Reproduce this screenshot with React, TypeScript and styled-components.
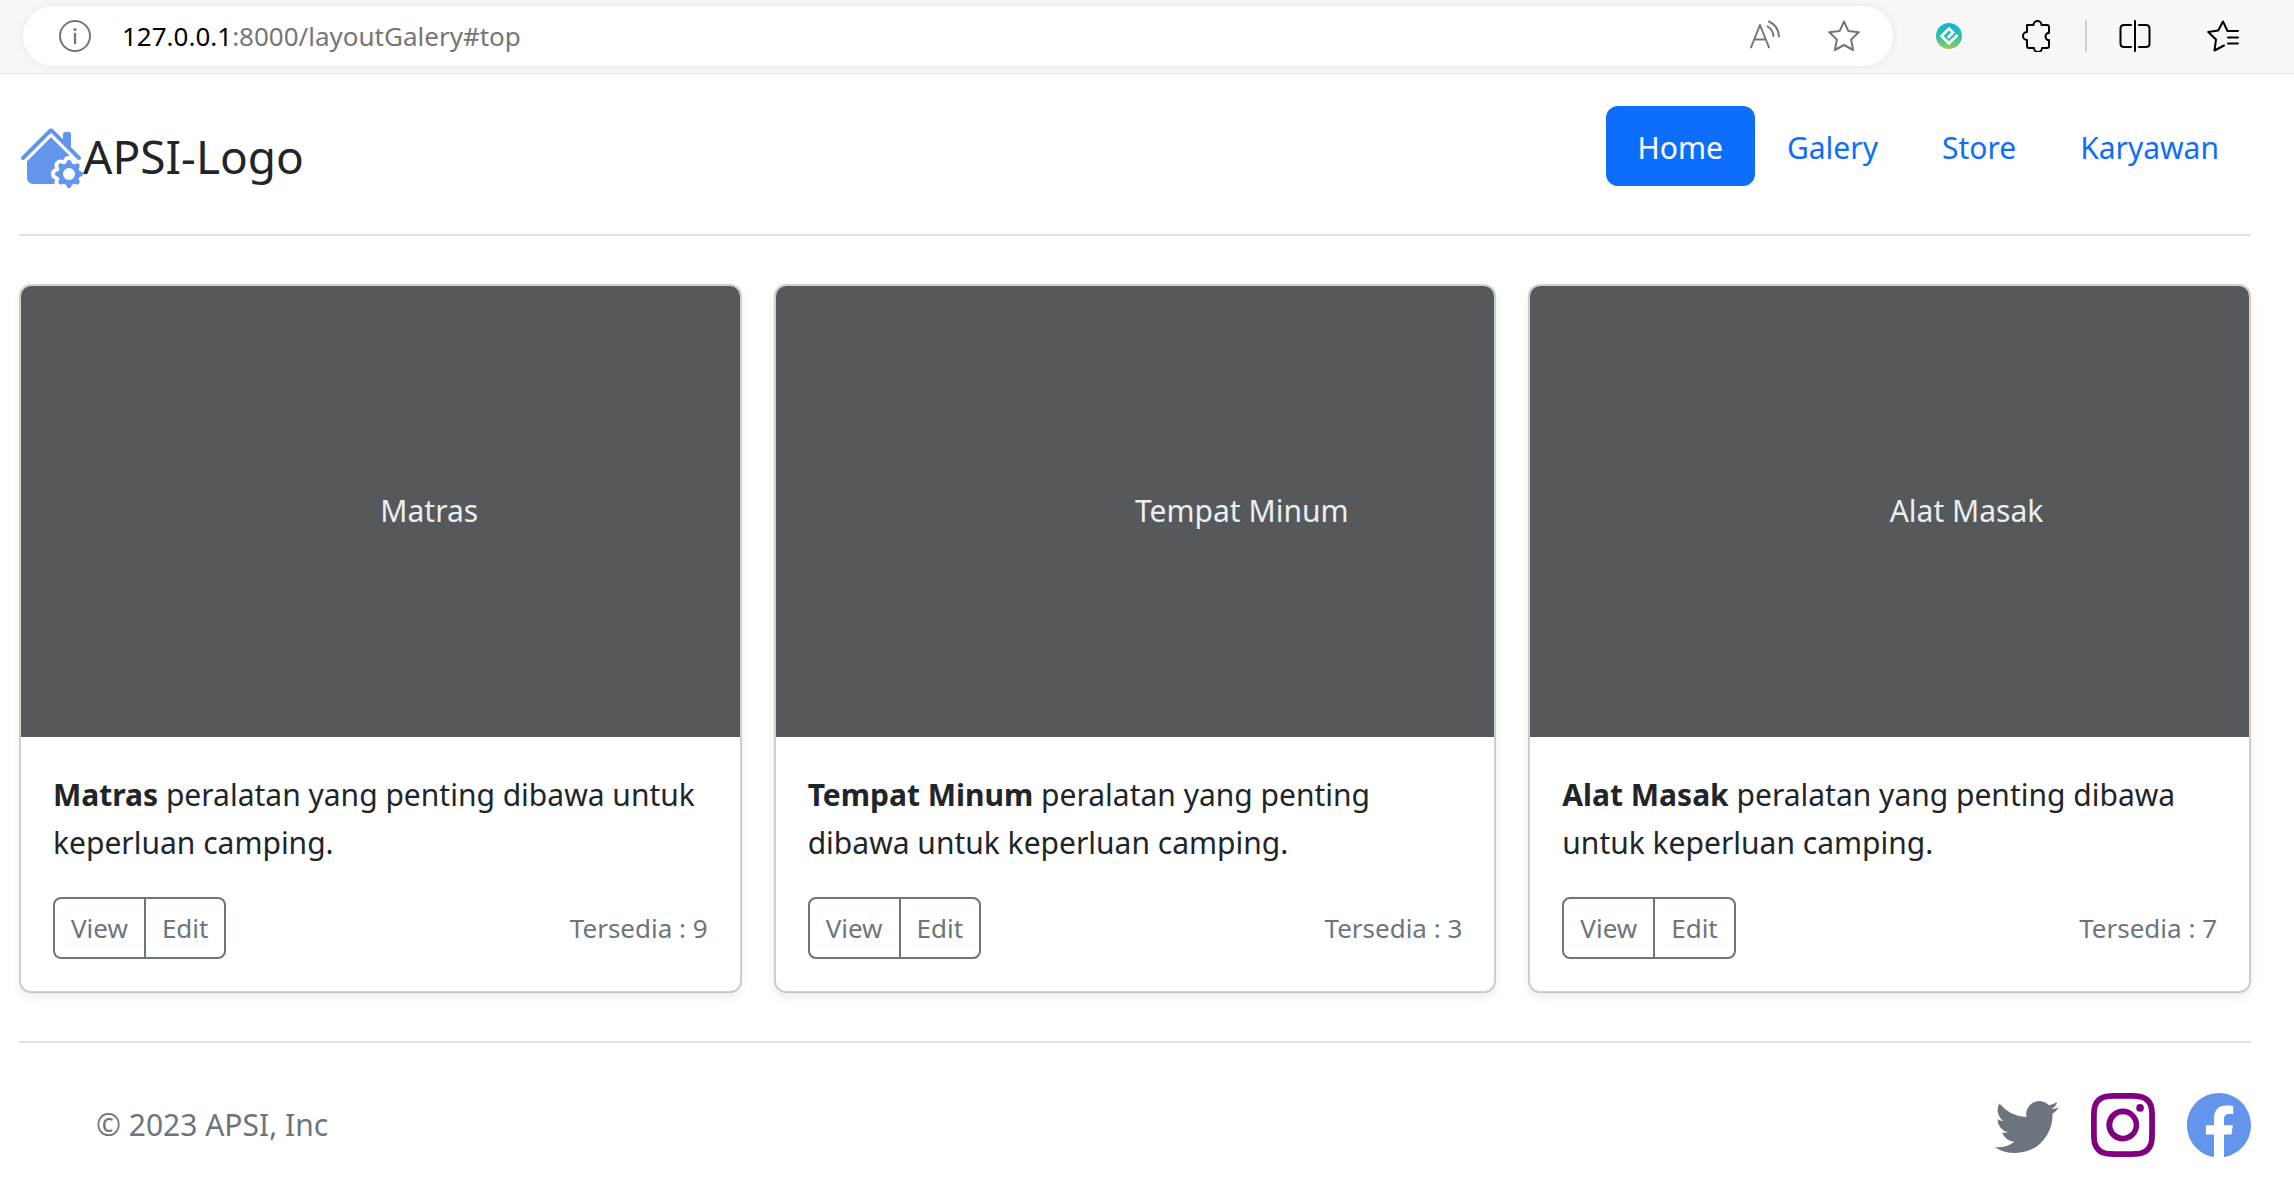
import React from "react";
import styled, { createGlobalStyle } from "styled-components";
import { BsHouseGearFill, BsTwitter, BsInstagram, BsFacebook } from "react-icons/bs";

const Global = createGlobalStyle`
  *, *::before, *::after { box-sizing: border-box; }
  body {
    margin: 0;
    background: #fff;
    color: #212529;
    font-family: "Noto Sans", "Open Sans", sans-serif;
    font-size: 30px;
    line-height: 48px;
  }
`;

const Toolbar = styled.div`
  display: flex;
  align-items: center;
  height: 74px;
  padding: 0 55px 2px 23px;
  background: #f7f7f7;
  border-bottom: 1px solid #e5e5e5;
`;

const AddressBar = styled.div`
  display: flex;
  flex: 1;
  align-items: center;
  height: 60px;
  padding: 0 33px 0 32px;
  border-radius: 30px;
  background: #fff;
  box-shadow: 0 0 8px rgba(0, 0, 0, 0.08);
`;

const Url = styled.div`
  flex: 1;
  margin-left: 27px;
  color: #767676;
  font-size: 26px;
`;

const Host = styled.span`
  color: #000;
`;

const ToolButton = styled.button<{ $muted?: boolean }>`
  display: flex;
  padding: 0;
  border: 0;
  background: none;
  color: ${(p) => (p.$muted ? "#767676" : "#000")};
`;

const BarActions = styled.div`
  display: flex;
  gap: 47px;
`;

const Extensions = styled.div`
  display: flex;
  align-items: center;
  gap: 56px;
  margin-left: 40px;
`;

const Divided = styled.div`
  display: flex;
  align-items: center;
  gap: 32px;
`;

const Separator = styled.span`
  width: 2px;
  height: 32px;
  background: #cfcfcf;
`;

const Page = styled.div`
  padding: 0 43px 0 19px;
`;

const Header = styled.header`
  display: flex;
  justify-content: space-between;
  padding: 32px 0;
  margin-bottom: 48px;
  border-bottom: 2px solid #dee2e6;
`;

const Brand = styled.a`
  display: flex;
  align-items: center;
  height: 96px;
  padding-top: 4px;
  color: #212529;
  font-size: 46px;
  line-height: 72px;
  text-decoration: none;

  svg {
    color: cornflowerblue;
  }
`;

const Nav = styled.nav`
  display: flex;
  align-items: flex-start;
`;

const NavLink = styled.a<{ $active?: boolean }>`
  padding: 18px 32px 14px;
  border-radius: 12px;
  background: ${(p) => (p.$active ? "#0d6efd" : "transparent")};
  color: ${(p) => (p.$active ? "#fff" : "#0d6efd")};
  text-decoration: none;
`;

const Gallery = styled.main`
  display: grid;
  grid-template-columns: repeat(3, minmax(0, 1fr));
  gap: 32px;
`;

const Card = styled.article`
  overflow: hidden;
  border: 2px solid rgba(0, 0, 0, 0.175);
  border-radius: 12px;
  background: #fff;
  background-clip: padding-box;
  box-shadow: 0 4px 8px rgba(0, 0, 0, 0.075);
`;

const Thumb = styled.div`
  display: flex;
  align-items: center;
  height: 451px;
  padding: 0 0 2px 50%;
  background: #55595c;
  color: #eceeef;
`;

const CardBody = styled.div`
  padding: 34px 32px 32px;
`;

const Description = styled.p`
  margin: 0 0 30px;
`;

const CardFooter = styled.div`
  display: flex;
  align-items: center;
  justify-content: space-between;
`;

const ButtonGroup = styled.div`
  display: flex;
`;

const SmallButton = styled.button`
  padding: 8px 16px;
  border: 2px solid #6c757d;
  background: none;
  color: #6c757d;
  font-family: inherit;
  font-size: 26px;
  line-height: 42px;

  &:first-child {
    border-radius: 8px 0 0 8px;
  }
  &:last-child {
    margin-left: -2px;
    border-radius: 0 8px 8px 0;
  }
`;

const Stock = styled.small`
  color: #6c757d;
  font-size: 26px;
  line-height: 42px;
`;

const Footer = styled.footer`
  display: flex;
  align-items: center;
  justify-content: space-between;
  margin-top: 48px;
  padding: 50px 0;
  border-top: 2px solid #dee2e6;
`;

const Copyright = styled.span`
  padding-left: 77px;
  color: #6c757d;
`;

const Socials = styled.ul`
  display: flex;
  gap: 32px;
  margin: 0;
  padding: 0;
  list-style: none;
`;

const SocialLink = styled.a<{ $color: string }>`
  display: flex;
  color: ${(p) => p.$color};
`;

type IconProps = { children: React.ReactNode };

const LineIcon = ({ children }: IconProps) => (
  <svg
    width="32"
    height="32"
    viewBox="0 0 32 32"
    fill="none"
    stroke="currentColor"
    strokeWidth="2"
    strokeLinecap="round"
    strokeLinejoin="round"
    aria-hidden="true"
  >
    {children}
  </svg>
);

const items = [
  { name: "Matras", stock: 9 },
  { name: "Tempat Minum", stock: 3 },
  { name: "Alat Masak", stock: 7 },
];

const links = ["Home", "Galery", "Store", "Karyawan"];

export default function App() {
  return (
    <>
      <Global />
      <Toolbar>
        <AddressBar>
          <ToolButton $muted aria-label="Site information">
            <svg width="40" height="40" viewBox="0 0 40 40" fill="none" stroke="currentColor" strokeWidth="2">
              <circle cx="20" cy="20" r="15" />
              <path d="M20 18v9" strokeWidth="2.4" strokeLinecap="round" />
              <circle cx="20" cy="13.5" r="1.6" fill="currentColor" stroke="none" />
            </svg>
          </ToolButton>
          <Url>
            <Host>127.0.0.1</Host>:8000/layoutGalery#top
          </Url>
          <BarActions>
            <ToolButton $muted aria-label="Read aloud">
              <LineIcon>
                <path d="M2 27.500 11 5l9 22.500M5 19.500h12" />
                <path d="M18.500 6.500c3.500 2 5.500 5 6 9.500M20 1.500c5.500 2.500 9.500 7.500 10 15" />
              </LineIcon>
            </ToolButton>
            <ToolButton $muted aria-label="Add to favorites">
              <LineIcon>
                <path d="M16 1.500l4.400 9.600 10.300 1.200-7.600 7.200 2 10.500L16 25l-9.100 5 2-10.500-7.600-7.200 10.300-1.200z" />
              </LineIcon>
            </ToolButton>
          </BarActions>
        </AddressBar>
        <Extensions>
          <ToolButton aria-label="Extension">
            <svg width="32" height="32" viewBox="0 0 32 32" fill="none" aria-hidden="true">
              <defs>
                <linearGradient id="badge" x1="0" y1="0" x2="0" y2="1">
                  <stop offset="0" stopColor="#0fb5d6" />
                  <stop offset="0.5" stopColor="#2dbfae" />
                  <stop offset="1" stopColor="#9cc95a" />
                </linearGradient>
              </defs>
              <circle cx="16" cy="16" r="13" fill="url(#badge)" />
              <path d="M15 17.500l5-5-4-4-7.500 7.500 7.500 7.500 8.500-8.500" stroke="#fff" strokeWidth="2.600" />
            </svg>
          </ToolButton>
          <Divided>
            <ToolButton aria-label="Extensions">
              <LineIcon>
                <path d="M6 5h6.500a4 4 0 0 1 8 0H26q2 0 2 2v6h-1.500a4 4 0 0 0 0 7H28v6q0 2-2 2h-5a4 4 0 0 1-8 0H8q-2 0-2-2v-6a4 4 0 0 1 0-8V5z" />
              </LineIcon>
            </ToolButton>
            <Separator />
            <ToolButton aria-label="Split screen">
              <LineIcon>
                <path d="M12 5H5Q1.500 5 1.500 8.500v15Q1.500 27 5 27h7M20 5h7q3.500 0 3.500 3.500v15Q30.500 27 27 27h-7M16 1v30" />
              </LineIcon>
            </ToolButton>
          </Divided>
          <ToolButton aria-label="Favorites">
            <LineIcon>
              <path d="M17 25.500L7.500 30.500l1.500-11L1.200 12l10-1.500L16 1.500l4.500 9.500H31M21 17.500h10M21 23.500h10" />
            </LineIcon>
          </ToolButton>
        </Extensions>
      </Toolbar>
      <Page>
        <Header>
          <Brand href="#top">
            <BsHouseGearFill size={64} />
            APSI-Logo
          </Brand>
          <Nav>
            {links.map((label, i) => (
              <NavLink key={label} href="#top" $active={i === 0}>
                {label}
              </NavLink>
            ))}
          </Nav>
        </Header>
        <Gallery>
          {items.map(({ name, stock }) => (
            <Card key={name}>
              <Thumb>{name}</Thumb>
              <CardBody>
                <Description>
                  <strong>{name}</strong> peralatan yang penting dibawa untuk keperluan camping.
                </Description>
                <CardFooter>
                  <ButtonGroup>
                    <SmallButton type="button">View</SmallButton>
                    <SmallButton type="button">Edit</SmallButton>
                  </ButtonGroup>
                  <Stock>Tersedia : {stock}</Stock>
                </CardFooter>
              </CardBody>
            </Card>
          ))}
        </Gallery>
        <Footer>
          <Copyright>© 2023 APSI, Inc</Copyright>
          <Socials>
            <li>
              <SocialLink href="#top" $color="#6c757d" aria-label="Twitter">
                <BsTwitter size={64} />
              </SocialLink>
            </li>
            <li>
              <SocialLink href="#top" $color="purple" aria-label="Instagram">
                <BsInstagram size={64} />
              </SocialLink>
            </li>
            <li>
              <SocialLink href="#top" $color="cornflowerblue" aria-label="Facebook">
                <BsFacebook size={64} />
              </SocialLink>
            </li>
          </Socials>
        </Footer>
      </Page>
    </>
  );
}
